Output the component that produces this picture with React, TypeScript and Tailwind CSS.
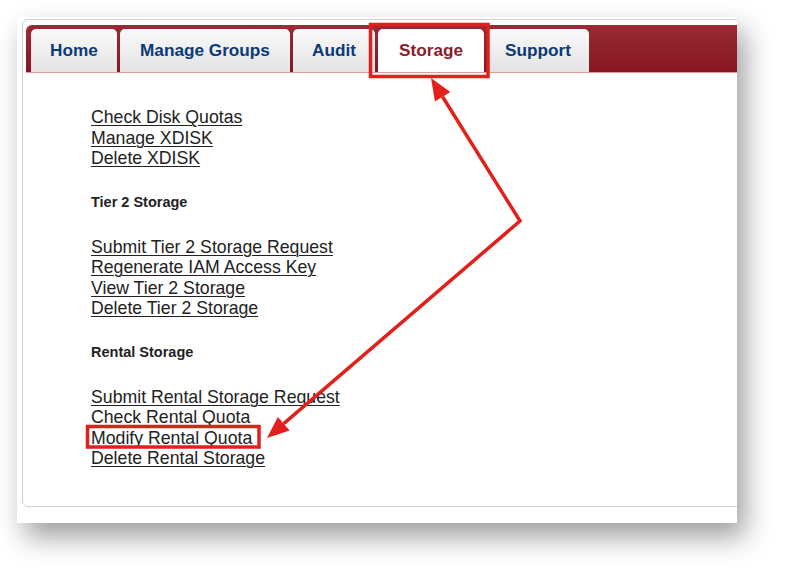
import React from "react";

interface ITab {
  label: string;
  width: string;
  active?: boolean;
}

const tabs: ITab[] = [
  { label: "Home", width: "w-[86px]" },
  { label: "Manage Groups", width: "w-[170px]" },
  { label: "Audit", width: "w-[82px]" },
  { label: "Storage", width: "w-[106px]", active: true },
  { label: "Support", width: "w-[102px]" },
];

const diskLinks = ["Check Disk Quotas", "Manage XDISK", "Delete XDISK"];
const tier2Links = [
  "Submit Tier 2 Storage Request",
  "Regenerate IAM Access Key",
  "View Tier 2 Storage",
  "Delete Tier 2 Storage",
];
const rentalLinks = [
  "Submit Rental Storage Request",
  "Check Rental Quota",
  "Modify Rental Quota",
  "Delete Rental Storage",
];

function LinkGroup({ links }: { links: string[] }) {
  return (
    <div className="flex flex-col items-start">
      {links.map((link) => (
        <a
          key={link}
          href="#"
          className="text-[17.7px] leading-[20.5px] text-[#222] underline decoration-1 underline-offset-[2px]"
        >
          {link}
        </a>
      ))}
    </div>
  );
}

function SectionTitle({ children }: { children: React.ReactNode }) {
  return (
    <h3 className="my-[25.5px] text-[14.5px] font-bold leading-[17px] text-[#222]">
      {children}
    </h3>
  );
}

// red call-outs drawn on top of the screenshot
function Annotations() {
  const red = "#e1201b";
  return (
    <svg
      className="pointer-events-none absolute left-0 top-0"
      width="785"
      height="572"
      viewBox="0 0 785 572"
    >
      <rect x="370.5" y="24.5" width="117.5" height="52" fill="none" stroke={red} strokeWidth="3.5" />
      <rect x="87.5" y="426.5" width="171.5" height="20.5" fill="none" stroke={red} strokeWidth="3.5" />
      <polyline
        points="442.6,96.7 520,221 283.7,423.7"
        fill="none"
        stroke={red}
        strokeWidth="3.5"
        strokeLinejoin="miter"
      />
      <polygon points="431,78 450.3,91.9 434.9,101.5" fill={red} />
      <polygon points="267,438 289.6,430.5 277.8,416.9" fill={red} />
    </svg>
  );
}

export default function App() {
  return (
    <div className="relative h-[572px] w-[785px] overflow-hidden bg-white font-['Liberation_Sans',Arial,sans-serif]">
      <div className="ml-[17px] mt-[17px] h-[506px] w-[720px] overflow-hidden bg-white shadow-[8px_14px_26px_rgba(0,0,0,0.38)]">
        <div className="ml-[5px] mt-[2px] h-[488px] w-[760px] rounded-[6px] border border-[#d2d2d2] pl-[3px] pt-[5px]">
          <div className="flex h-[48px] items-end gap-[3px] rounded-tl-[6px] border-b border-[#e59aa0] bg-gradient-to-b from-[#9a2b36] to-[#86161f] pl-[5px]">
            {tabs.map((tab) => (
              <div
                key={tab.label}
                className={`${tab.width} flex h-[43px] items-center justify-center rounded-t-[5px] text-[17.2px] font-bold ${
                  tab.active
                    ? "bg-white text-[#8c1b2b]"
                    : "bg-gradient-to-b from-[#fafafa] to-[#e3e3e3] text-[#0a3a77]"
                }`}
              >
                {tab.label}
              </div>
            ))}
          </div>

          <div className="pl-[65px] pt-[34px]">
            <LinkGroup links={diskLinks} />
            <SectionTitle>Tier 2 Storage</SectionTitle>
            <LinkGroup links={tier2Links} />
            <SectionTitle>Rental Storage</SectionTitle>
            <LinkGroup links={rentalLinks} />
          </div>
        </div>
      </div>
      <Annotations />
    </div>
  );
}
